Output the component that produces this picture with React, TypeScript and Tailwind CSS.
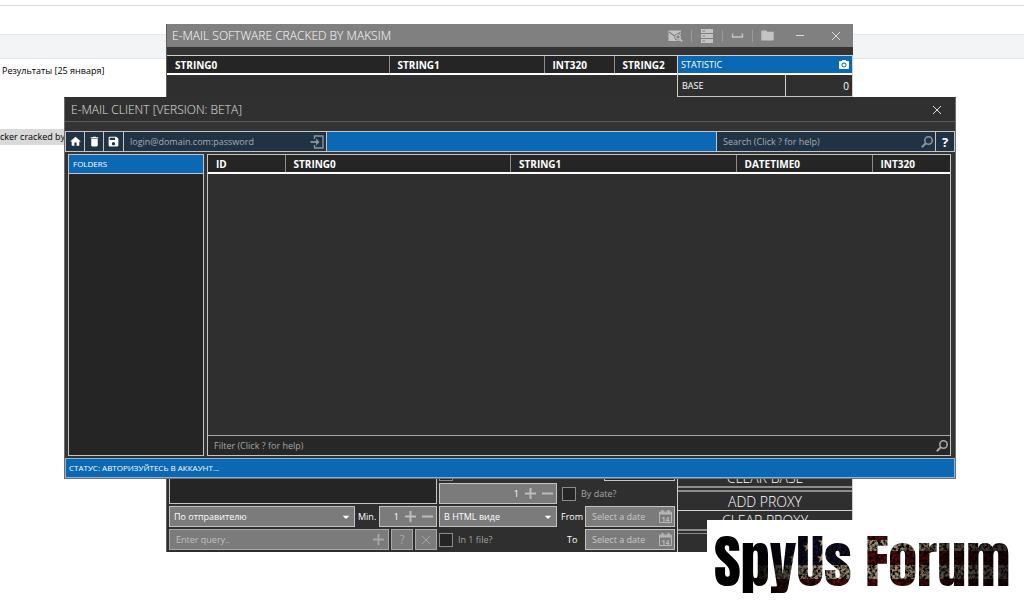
import React, { useState } from 'react';
import {
  MdArrowDropDown,
  MdDelete,
  MdFolder,
  MdHome,
  MdPhotoCamera,
  MdSave,
  MdSpaceBar,
} from 'react-icons/md';

const uiFont = 'font-["Open_Sans","Noto_Sans",sans-serif]';

/* Icons */

const CloseIcon = () => (
  <svg className="w-2 h-2" viewBox="0 0 8 8" fill="none" stroke="currentColor">
    <path d="M0 0L8 8M8 0L0 8" />
  </svg>
);

const SearchIcon = () => (
  <svg className="w-3 h-3 shrink-0" viewBox="0 0 12 12" fill="none" stroke="currentColor" strokeWidth="1.6">
    <circle cx="7.5" cy="4.5" r="3.7" />
    <path d="M5 7L0.8 11.2" strokeWidth="2" />
  </svg>
);

const LoginIcon = () => (
  <svg className="w-[14px] h-[14px]" viewBox="0 0 14 14" fill="none" stroke="currentColor" strokeWidth="1.4">
    <path d="M4.5 4V1H13V13H4.5V10" />
    <path d="M0.5 7H8" strokeWidth="1.8" />
    <path d="M6 3.6L9.5 7L6 10.4Z" fill="currentColor" stroke="none" />
  </svg>
);

const MailSearchIcon = () => (
  <svg className="w-[15px] h-3" viewBox="0 0 15 12">
    <path d="M0.5 0.5H13V11H0.5Z" fill="currentColor" />
    <path d="M1 2L6.7 6L12.6 2" fill="none" stroke="#808080" strokeWidth="1.2" />
    <circle cx="10" cy="7" r="3.6" fill="#808080" />
    <circle cx="10" cy="7" r="2.2" fill="none" stroke="currentColor" strokeWidth="1.2" />
    <path d="M11.5 8.6L14.3 11.5" stroke="currentColor" strokeWidth="1.5" />
  </svg>
);

const ServerIcon = () => (
  <svg className="w-3 h-[14px]" viewBox="0 0 12 14">
    <path d="M0 0H12V4H0ZM0 5H12V9H0ZM0 10H12V14H0Z" fill="currentColor" />
    <path d="M1.5 2H4M1.5 7H4M1.5 12H4" stroke="#808080" />
  </svg>
);

const PlusIcon = () => (
  <svg className="w-[11px] h-[11px]" viewBox="0 0 11 11" stroke="currentColor" strokeWidth="2">
    <path d="M5.5 0V11M0 5.5H11" />
  </svg>
);

const MinusIcon = () => (
  <svg className="w-[11px] h-[11px]" viewBox="0 0 11 11" stroke="currentColor" strokeWidth="2">
    <path d="M0 5.5H11" />
  </svg>
);

const CalendarIcon = () => (
  <svg className="w-[13px] h-[13px] shrink-0" viewBox="0 0 13 13" fill="none" stroke="currentColor">
    <path d="M0.5 2H12.5V12.5H0.5Z" />
    <path d="M0.5 3.5H12.5" strokeWidth="2" />
    <path d="M3.5 0V3M9.5 0V3" strokeWidth="2" />
    <text x="6.5" y="11.5" fontSize="7" fontWeight="700" textAnchor="middle" fill="currentColor" stroke="none">
      14
    </text>
  </svg>
);

/* Form parts */

interface SpinnerProps {
  label: string;
  className?: string;
}

const Spinner: React.FC<SpinnerProps> = ({ label, className = '' }) => {
  const [value, setValue] = useState(1);
  return (
    <div className={`flex items-center h-[21px] border border-[#c4c4c4] bg-[#7b7b7b] pr-[3px] gap-[6px] text-[#bdbdbd] ${className}`}>
      <input
        type="text"
        inputMode="numeric"
        aria-label={label}
        value={value}
        onChange={e => setValue(Number(e.target.value) || 0)}
        className="flex-1 min-w-0 bg-transparent text-right text-white outline-none"
      />
      <button aria-label="Increase" onClick={() => setValue(value + 1)}><PlusIcon /></button>
      <button aria-label="Decrease" onClick={() => setValue(value - 1)}><MinusIcon /></button>
    </div>
  );
};

const Dropdown: React.FC<{ label: string; option: string; className?: string }> = ({ label, option, className = '' }) => (
  <div className={`flex items-center h-[21px] border border-[#c4c4c4] bg-[#7b7b7b] text-white ${className}`}>
    <select aria-label={label} className="flex-1 min-w-0 appearance-none bg-transparent pl-1 outline-none">
      <option>{option}</option>
    </select>
    <MdArrowDropDown className="w-4 h-4 pointer-events-none" />
  </div>
);

const DateField: React.FC<{ id: string }> = ({ id }) => (
  <div className="flex items-center w-[90px] h-[21px] border border-[#c4c4c4] bg-[#7b7b7b] pl-[6px] pr-[2px] text-[#b8b8b8]">
    <input id={id} type="text" placeholder="Select a date" className="flex-1 min-w-0 bg-transparent outline-none placeholder:text-[#c8c8c8]" />
    <CalendarIcon />
  </div>
);

const Checkbox: React.FC<{ label: string }> = ({ label }) => (
  <label className="flex items-center h-[21px] gap-[5px] text-[#a5a5a5]">
    <input type="checkbox" className="appearance-none w-[14px] h-[14px] border border-[#8c8c8c] bg-[#252525] checked:bg-[#0b68b4]" />
    {label}
  </label>
);

interface Column {
  name: string;
  width: string;
}

const DataTable: React.FC<{ columns: Column[] }> = ({ columns }) => (
  <table className="w-full table-fixed border-collapse">
    <thead className="bg-[#252525] border-b-2 border-white">
      <tr>
        {columns.map((col, index) => (
          <th
            key={index}
            className={`h-[18px] py-0 pl-2 text-left text-[10px] font-bold text-white border-r border-[#8c8c8c] last:border-r-0 ${col.width}`}
          >
            {col.name}
          </th>
        ))}
      </tr>
    </thead>
  </table>
);

const resultColumns: Column[] = [
  { name: 'STRING0', width: '' },
  { name: 'STRING1', width: 'w-[155px]' },
  { name: 'INT320', width: 'w-[70px]' },
  { name: 'STRING2', width: 'w-[63px]' },
];

const mailColumns: Column[] = [
  { name: 'ID', width: 'w-[77px]' },
  { name: 'STRING0', width: '' },
  { name: 'STRING1', width: '' },
  { name: 'DATETIME0', width: 'w-[136px]' },
  { name: 'INT320', width: 'w-[78px]' },
];

/* Windows */

const MainWindow = () => (
  <section className="absolute left-[166px] right-[171px] top-6 h-[528px] flex flex-col bg-[#2f2f2f] border-l border-[#5c5c5c] text-white">
    <header className="flex items-center h-[23px] pl-[5px] pr-[13px] bg-[#808080] text-[#c4c4c4]">
      <h1 className="flex-1 text-[12px] font-light text-white">E-MAIL SOFTWARE CRACKED BY MAKSIM</h1>
      <div className="flex items-center divide-x divide-[#9a9a9a] mr-[14px]">
        <button aria-label="Check mail" className="h-3 pr-2"><MailSearchIcon /></button>
        <button aria-label="Servers" className="flex items-center h-3 px-[9px]"><ServerIcon /></button>
        <button aria-label="Collapse" className="flex items-center h-3 px-[6px]"><MdSpaceBar className="w-[17px] h-[17px]" /></button>
        <button aria-label="Open folder" className="flex items-center h-3 px-[7px]"><MdFolder className="w-[15px] h-[15px]" /></button>
      </div>
      <button aria-label="Minimize" className="w-2 h-px mr-7 bg-[#dcdcdc]" />
      <button aria-label="Close window" className="text-[#dcdcdc]"><CloseIcon /></button>
    </header>

    <div className="flex flex-1 pt-2 bg-[#343434]">
      <div className="flex flex-1 flex-col bg-[#2f2f2f]">
        <div className="flex-1 border-t border-[#d0d0d0]">
          <DataTable columns={resultColumns} />
        </div>

        <div className="flex gap-[2px] pl-[2px] pr-[2px] pb-[2px]">
          <div className="flex flex-1 flex-col gap-[2px] min-w-0">
            <div className="h-11 border border-[#c4c4c4] bg-[#252525]" />
            <div className="flex items-center">
              <Dropdown label="Search by" option="По отправителю" className="flex-1 min-w-0" />
              <span className="w-6 pl-[3px]">Min.</span>
              <Spinner label="Min." className="w-[58px]" />
            </div>
            <div className="flex gap-[2px]">
              <div className="flex flex-1 items-center h-[21px] min-w-0 border border-[#a8a8a8] bg-[#7b7b7b] px-1 text-[#a5a5a5]">
                <input type="text" aria-label="Query" placeholder="Enter query.." className="flex-1 min-w-0 bg-transparent pl-[2px] outline-none placeholder:text-[#c0c0c0]" />
                <button aria-label="Add query"><PlusIcon /></button>
              </div>
              <button className="w-[22px] border border-[#a8a8a8] bg-[#7b7b7b] text-[12px] text-[#a5a5a5]">?</button>
              <button aria-label="Clear" className="flex items-center justify-center w-[22px] border border-[#a8a8a8] bg-[#7b7b7b] text-[#a5a5a5]">
                <CloseIcon />
              </button>
            </div>
          </div>

          <div className="flex w-[118px] flex-col justify-end gap-[2px]">
            <div className="w-[14px] h-[14px] border border-[#8c8c8c] bg-[#252525]" />
            <Spinner label="Count" />
            <Dropdown label="Format" option="В HTML виде" />
            <Checkbox label="In 1 file?" />
          </div>

          <div className="flex w-[116px] flex-col justify-end gap-[2px]">
            <div className="self-end w-[71px] h-4 border border-[#c4c4c4] bg-[#252525]" />
            <div className="pl-[3px]">
              <Checkbox label="By date?" />
            </div>
            <div className="flex items-center justify-between">
              <label htmlFor="from" className="pl-[2px]">From</label>
              <DateField id="from" />
            </div>
            <div className="flex items-center justify-between">
              <label htmlFor="to" className="pl-2">To</label>
              <DateField id="to" />
            </div>
          </div>
        </div>
      </div>

      <aside className="flex w-[176px] flex-col border-x border-[#d0d0d0] bg-[#2f2f2f]">
        <div className="flex items-center h-[18px] border-t border-[#d0d0d0] bg-[#0b68b4] pl-[3px] pr-[2px]">
          <h2 className="flex-1">STATISTIC</h2>
          <button aria-label="Screenshot"><MdPhotoCamera className="w-3 h-3" /></button>
        </div>
        <dl className="flex items-center h-6 border-t-2 border-b border-t-white border-b-[#c4c4c4]">
          <dt className="flex-1 pl-1">BASE</dt>
          <dd className="flex items-center justify-end w-[67px] h-full border-l border-[#d0d0d0] pr-[3px] text-[10px]">0</dd>
        </dl>
        <div className="flex flex-1 flex-col justify-end text-[14px] leading-5 font-light">
          <button className="h-5 border-b-2 border-[#8c8c8c]">CLEAR BASE</button>
          <button className="h-[21px] mt-[2px] border-t-2 border-b border-t-[#8c8c8c] border-b-[#d0d0d0]">ADD PROXY</button>
          <button className="h-5 border-b-2 border-[#8c8c8c]">CLEAR PROXY</button>
          <div className="h-[19px] mt-[2px] border-t border-[#8c8c8c]" />
        </div>
      </aside>
    </div>
  </section>
);

const ClientWindow = () => (
  <section className="absolute left-16 right-[68px] top-[97px] h-[382px] flex flex-col border border-[#6e6e6e] border-t-[#303030] bg-[#343434] text-white">
    <header className="flex items-center h-6 pl-[6px] pr-[14px] border-b border-[#5c5c5c] bg-[#303030] text-[#e0e0e0]">
      <h1 className="flex-1 text-[12px] font-light">E-MAIL CLIENT [VERSION: BETA]</h1>
      <button aria-label="Close client"><CloseIcon /></button>
    </header>

    <div className="flex h-[21px] mt-[9px] border border-[#c4c4c4] bg-[#1f3344] divide-x divide-[#c4c4c4]">
      <button aria-label="Home" className="flex items-center justify-center w-[19px]"><MdHome className="w-[13px] h-[13px]" /></button>
      <button aria-label="Delete" className="flex items-center justify-center w-[19px]"><MdDelete className="w-[13px] h-[13px]" /></button>
      <button aria-label="Save" className="flex items-center justify-center w-[20px]"><MdSave className="w-[13px] h-[13px]" /></button>
      <div className="flex items-center w-[203px] pl-[6px] pr-[2px] text-[#8a959d]">
        <input type="text" aria-label="Account" placeholder="login@domain.com:password" className="flex-1 min-w-0 bg-transparent outline-none placeholder:text-[#a5adb3]" />
        <button aria-label="Log in"><LoginIcon /></button>
      </div>
      <div className="flex-1 bg-[#0b68b4]" />
      <div className="flex items-center w-[219px] pl-[6px] pr-[2px] text-[#8a959d]">
        <input type="text" aria-label="Search" placeholder="Search (Click ? for help)" className="flex-1 min-w-0 bg-transparent outline-none placeholder:text-[#a5adb3]" />
        <SearchIcon />
      </div>
      <button className="w-[18px] text-[13px] font-bold">?</button>
    </div>

    <div className="flex flex-1 gap-[3px] pt-[2px] pb-[2px] pl-[3px] pr-1">
      <aside className="w-[136px] border border-[#c4c4c4] bg-[#252525]">
        <h2 className="flex items-center h-[19px] pl-1 border-b border-[#c4c4c4] bg-[#0b68b4] text-[8px]">FOLDERS</h2>
      </aside>
      <div className="flex flex-1 flex-col border border-[#c4c4c4] bg-[#2f2f2f]">
        <div className="flex-1">
          <DataTable columns={mailColumns} />
        </div>
        <div className="flex items-center h-5 border-t border-[#a8a8a8] bg-[#272727] pl-[6px] pr-[2px] text-[#a5a5a5]">
          <input type="text" aria-label="Filter" placeholder="Filter (Click ? for help)" className="flex-1 min-w-0 bg-transparent outline-none placeholder:text-[#a5a5a5]" />
          <SearchIcon />
        </div>
      </div>
    </div>

    <footer className="flex items-center h-5 pl-[3px] border border-[#8db4d3] bg-[#0b68b4] text-[8px]">
      СТАТУС: АВТОРИЗУЙТЕСЬ В АККАУНТ...
    </footer>
  </section>
);

const star = 'M0 -5L1.2 -1.6L5 -1.6L2 0.7L3.1 4.2L0 2L-3.1 4.2L-2 0.7L-5 -1.6L-1.2 -1.6Z';

const Logo = () => (
  <svg
    className="absolute right-0 bottom-0 w-[317px] h-[87px] bg-white"
    viewBox="0 0 317 87"
    role="img"
    aria-label="SpyUs Forum"
  >
    <defs>
      <filter id="grunge" x="0" y="0" width="100%" height="100%">
        <feTurbulence type="fractalNoise" baseFrequency="0.35" numOctaves="3" seed="4" />
        <feColorMatrix values="0 0 0 0 0  0 0 0 0 0  0 0 0 0 0  3 0 0 0 -1.1" />
      </filter>
      <linearGradient id="shade">
        <stop offset="0" stopColor="#000" />
        <stop offset="0.13" stopColor="#000" />
        <stop offset="0.26" stopColor="#000" stopOpacity="0.5" />
        <stop offset="0.35" stopColor="#000" stopOpacity="0.1" />
        <stop offset="0.6" stopColor="#000" stopOpacity="0.1" />
        <stop offset="0.75" stopColor="#000" stopOpacity="0.5" />
        <stop offset="1" stopColor="#000" stopOpacity="0.75" />
      </linearGradient>
      <pattern id="flag" width="317" height="87" patternUnits="userSpaceOnUse">
        <rect width="317" height="87" fill="#5c0c0e" />
        <rect y="20" width="317" height="11" fill="#a8967c" />
        <rect y="45" width="317" height="14" fill="#a8967c" />
        <rect width="146" height="45" fill="#14122e" />
        <rect width="317" height="87" filter="url(#grunge)" />
        <g fill="#b3986e">
          <path d={star} transform="translate(101 27)" />
          <path d={star} transform="translate(116 22)" />
          <path d={star} transform="translate(115 38)" />
          <path d={star} transform="translate(87 38)" />
        </g>
        <rect width="317" height="87" fill="url(#shade)" />
      </pattern>
    </defs>
    <text
      x="7"
      y="66"
      fontSize="58"
      fill="url(#flag)"
      className='font-["Impact","Anton","Oswald","Open_Sans_Condensed",sans-serif] font-normal'
    >
      SpyUs Forum
    </text>
  </svg>
);

const App = () => {
  return (
    <div className={`relative min-h-screen overflow-hidden bg-white text-[9px] leading-4 text-black ${uiFont}`}>
      {/* Page behind the windows */}
      <div className="h-[6px] border-b border-[#dcdcdc]" />
      <div className="h-[25px] mt-7 border-y border-[#e4e6e8] bg-[#f3f4f6]" />
      <p className="mt-1 pl-[2px]">Результаты [25 января]</p>
      <p className="mt-[50px] w-16 whitespace-nowrap bg-[#d9d9d9]">cker cracked by</p>

      <MainWindow />
      <ClientWindow />
      <Logo />
    </div>
  );
};

export default App;
